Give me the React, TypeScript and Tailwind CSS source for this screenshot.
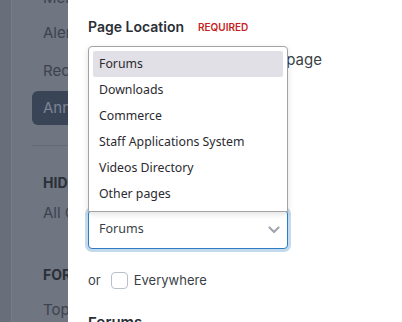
import React from 'react'

const sidebarFont = { fontFamily: 'Inter, "Noto Sans", sans-serif' }

const pageOptions = [
  'Forums',
  'Downloads',
  'Commerce',
  'Staff Applications System',
  'Videos Directory',
  'Other pages',
]

function Sidebar() {
  return (
    <div className="flex w-[68px] shrink-0 overflow-hidden bg-[#6f7581]" style={sidebarFont}>
      <div className="w-[12px] shrink-0 border-r border-[#757b87] bg-[#686e7a]" />
      <div className="flex w-[200px] shrink-0 flex-col pl-[20px] pt-0 text-[15px] text-[#3d434d]">
        <div className="-mt-[12px] shrink-0 pl-[11px] leading-[20px]">Menu items</div>
        <div className="mt-[15px] shrink-0 pl-[11px] leading-[20px]">Alerts</div>
        <div className="mt-[18px] shrink-0 pl-[11px] leading-[20px]">Recent</div>
        <div className="mt-[10px] flex h-[34px] shrink-0 items-center rounded-md bg-[#3a4457] pl-[11px] text-[#7d8594]">
          Announcements
        </div>
        <div className="mt-[20px] shrink-0 border-t border-[#636975]" />
        <div className="mt-[27px] shrink-0 pl-[11px] text-[14px] font-bold leading-[20px] text-[#2a2f38]">HIDDEN</div>
        <div className="mt-[10px] shrink-0 pl-[11px] leading-[20px]">All Categories</div>
        <div className="mt-[42px] shrink-0 pl-[11px] text-[14px] font-bold leading-[20px] text-[#2a2f38]">FORUMS</div>
        <div className="mt-[15px] shrink-0 pl-[11px] leading-[20px]">Topics</div>
      </div>
    </div>
  )
}

function Chevron() {
  return (
    <svg width="12" height="8" viewBox="0 0 12 8" fill="none">
      <path d="M1.5 1.5 L6 6 L10.5 1.5" stroke="#a3a8ae" strokeWidth="2.2" strokeLinecap="round" strokeLinejoin="round" />
    </svg>
  )
}

export default function App() {
  return (
    <div className="flex h-[322px] w-[402px] overflow-hidden bg-white">
      <Sidebar />
      <div className="flex flex-1 flex-col bg-white pl-[20px]" style={{ fontFamily: 'Inter, "Noto Sans", sans-serif' }}>
        <div className="mt-[17px] flex shrink-0 items-center gap-[14px]">
          <span className="text-[14px] font-semibold leading-[20px] text-[#2b2f36]">Page Location</span>
          <span className="text-[10px] font-semibold leading-[14px] text-[#c51f24]">REQUIRED</span>
        </div>

        {/* field underneath the open list */}
        <div className="relative h-[173px] shrink-0">
          <div className="mt-[13px] w-[234px] text-right text-[15px] leading-[20px] text-[#3a3f47]">
            Show on a specific page
          </div>
        </div>

        <div className="relative w-[200px] shrink-0">
          {/* open option list */}
          <div
            className="absolute bottom-[calc(100%-2px)] left-0 w-[200px] rounded-t-[4px] border border-[#a3a3a3] bg-white p-[4px] shadow-[0_2px_6px_rgba(0,0,0,0.12)]"
            style={{ fontFamily: '"Noto Sans", "Open Sans", sans-serif' }}
          >
            {pageOptions.map((opt, i) => (
              <div
                key={opt}
                className={
                  i === 0
                    ? 'flex h-[26px] items-center rounded-[2px] bg-[#e1e0e6] px-[6px] text-[12.3px] text-[#2b2a30]'
                    : 'flex h-[26px] items-center px-[6px] text-[12.3px] text-[#2b2a30]'
                }
              >
                {opt}
              </div>
            ))}
          </div>

          <div className="flex h-[39px] items-center justify-between rounded-[4px] border border-[#2f7bc4] bg-white pl-[10px] pr-[7px] shadow-[0_0_0_3px_#c3d9ec]">
            <span className="text-[12.5px] text-[#3a3f47]" style={{ fontFamily: '"Noto Sans", sans-serif' }}>
              Forums
            </span>
            <Chevron />
          </div>
        </div>

        <div className="mt-[22px] flex shrink-0 items-center text-[13px] text-[#3a3f47]">
          <span>or</span>
          <span className="ml-[10px] h-[17px] w-[17px] rounded-[4px] border border-[#b9c0c8] bg-white" />
          <span className="ml-[6px]">Everywhere</span>
        </div>

        <div className="mt-[22px] shrink-0 text-[15px] font-semibold leading-[20px] text-[#2b2f36]">Forums</div>
      </div>
    </div>
  )
}
